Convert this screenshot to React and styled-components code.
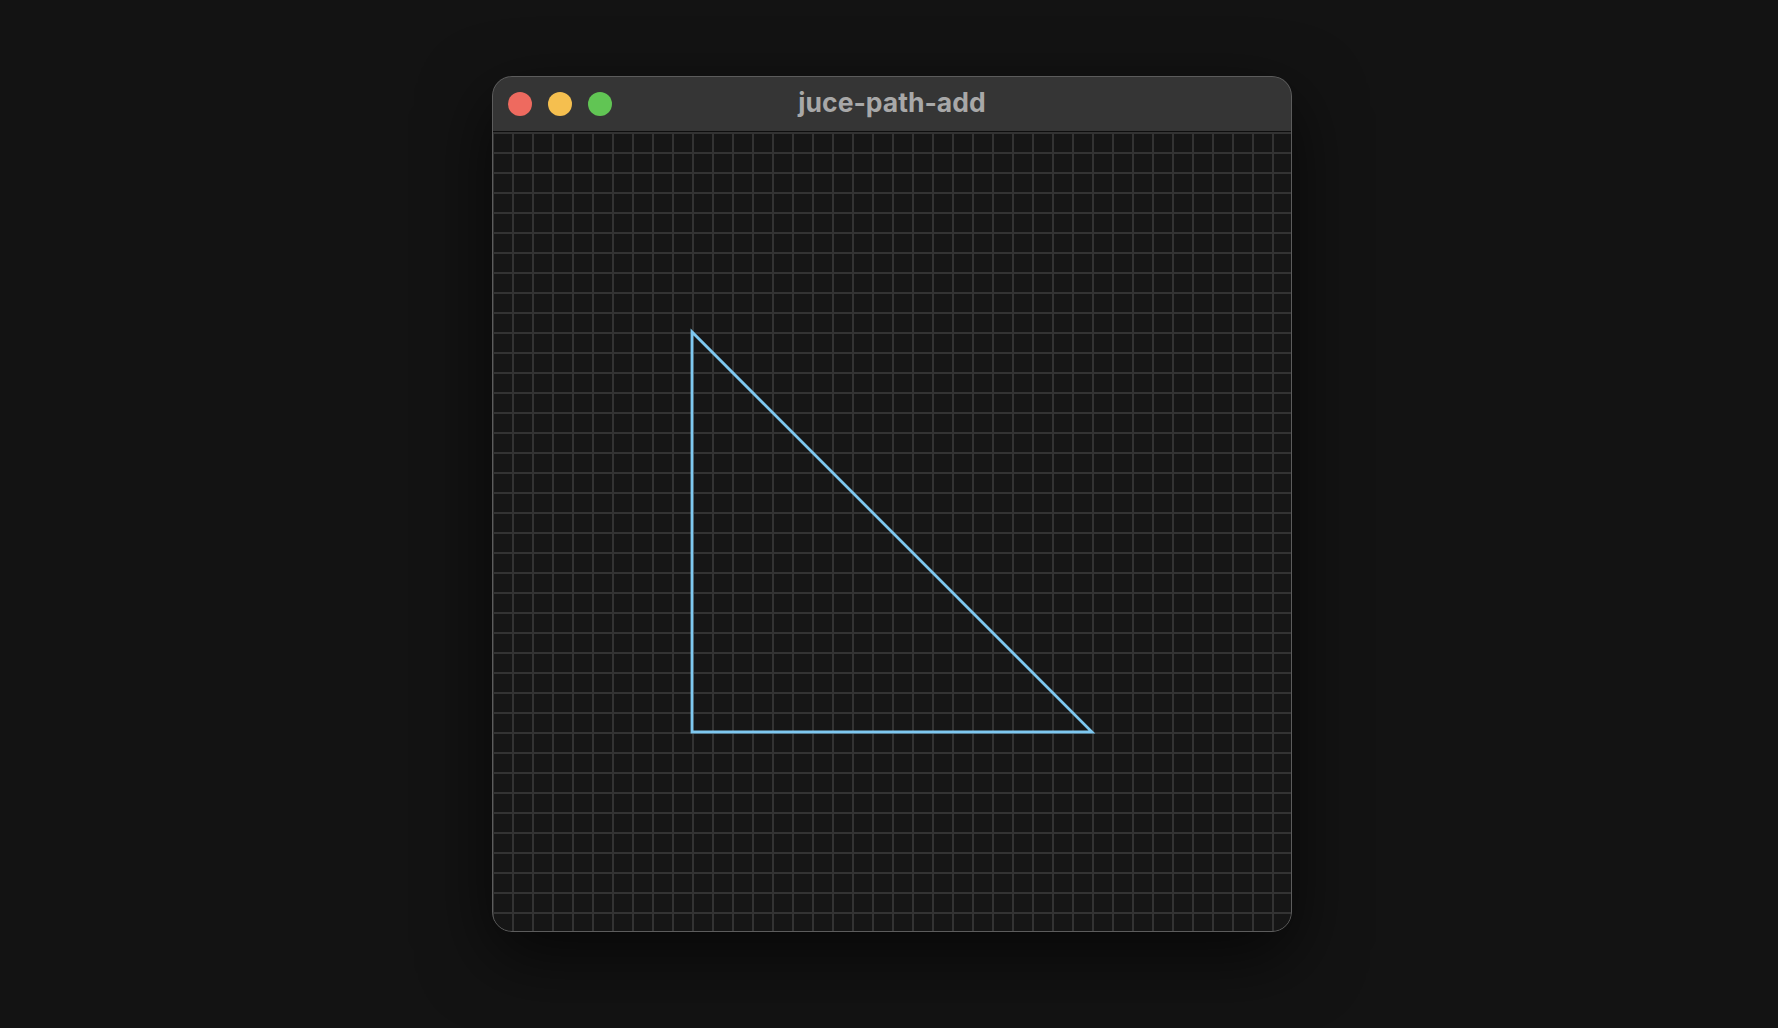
import styled, { createGlobalStyle } from 'styled-components';

const GlobalStyle = createGlobalStyle`
  html, body {
    margin: 0;
    padding: 0;
    background: #131313;
  }
`;

const Page = styled.div`
  width: 1778px;
  height: 1028px;
  box-sizing: border-box;
  padding: 76px 0 0 492px;
  background: #131313;
  overflow: hidden;
`;

const Window = styled.div`
  width: 800px;
  display: flex;
  flex-direction: column;
  position: relative;
  border-radius: 20px;
  overflow: hidden;
  box-shadow: 0 24px 70px rgba(0, 0, 0, 0.65);
  background: #161616;

  &::after {
    content: '';
    position: absolute;
    inset: 0;
    border-radius: 20px;
    border: 1px solid #5c5c5c;
    pointer-events: none;
  }
`;

const TitleBar = styled.div`
  height: 55px;
  display: flex;
  align-items: center;
  position: relative;
  background: #353535;
  border-bottom: 1px solid #0e0e0e;
`;

const Lights = styled.div`
  display: flex;
  gap: 16px;
  padding-left: 16px;
`;

const Light = styled.span`
  width: 24px;
  height: 24px;
  border-radius: 50%;
  background: ${(p) => p.color};
`;

const Title = styled.div`
  position: absolute;
  left: 0;
  right: 0;
  top: 10px;
  text-align: center;
  font-family: Inter, "Liberation Sans", sans-serif;
  font-weight: 700;
  font-size: 26.5px;
  line-height: 32px;
  color: #a8a8a8;
`;

const Canvas = styled.div`
  width: 800px;
  height: 800px;
  line-height: 0;
`;

const lines = Array.from({ length: 40 }, (_, i) => i * 20);

const App = () => {
  return (
    <>
      <GlobalStyle />
      <Page>
        <Window>
          <TitleBar>
            <Lights>
              <Light color='#ee6a5f' />
              <Light color='#f5bf4f' />
              <Light color='#61c554' />
            </Lights>
            <Title>juce-path-add</Title>
          </TitleBar>
          <Canvas>
            <svg width='800' height='800' viewBox='0 0 800 800'>
              <rect width='800' height='800' fill='#161616' />
              {lines.map((v) => (
                <g key={v} fill='#333333'>
                  <rect x={v} y='0' width='2' height='800' />
                  <rect x='0' y={v} width='800' height='2' />
                </g>
              ))}
              <path
                d='M200 200 L200 600 L600 600 Z'
                fill='none'
                stroke='#7ec8f0'
                strokeWidth='2.8'
                strokeLinejoin='miter'
              />
            </svg>
          </Canvas>
        </Window>
      </Page>
    </>
  );
};

export default App;
